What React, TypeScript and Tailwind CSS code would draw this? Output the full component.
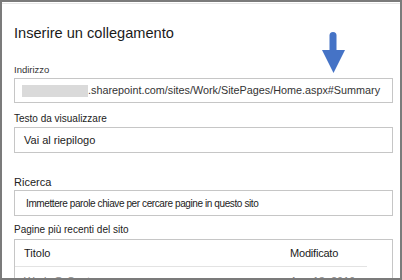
export default function App() {
  return (
    <div className="relative w-[402px] h-[280px] overflow-hidden bg-white border-2 border-[#7b7b7b] text-[#222]" style={{ fontFamily: '"Liberation Sans", Arial, sans-serif' }}>
      <div className="h-px mt-[1px] bg-[#e8e8e8]" />

      {/* freccia blu */}
      <svg className="absolute left-[320px] top-[30px]" width="23" height="42" viewBox="0 0 23 42">
        <rect x="7.5" y="0" width="7" height="22" rx="3.5" fill="#4573c6" />
        <polygon points="0,18 23,18 11.5,41" fill="#4573c6" />
      </svg>

      <div className="pl-[12px] pr-[7px]">
        <h1 className="mt-[19px] text-[14.6px] leading-[20px] font-normal text-[#1a1a1a]">Inserire un collegamento</h1>

        <div className="mt-[21px] text-[9.5px] leading-[12px] text-[#333]">Indirizzo</div>
        <div className="mt-[2px] h-[25px] border border-[#c6c6c6] flex items-center px-[7px] text-[10.8px] text-[#333] whitespace-nowrap">
          <span className="shrink-0 inline-block w-[66px] h-[12px] bg-[#dadada]" />
          <span>.sharepoint.com/sites/Work/SitePages/Home.aspx#Summary</span>
        </div>

        <div className="mt-[9px] text-[10px] leading-[14px]">Testo da visualizzare</div>
        <div className="mt-[1px] h-[26px] border border-[#c6c6c6] flex items-center px-[9px] text-[11px]">Vai al riepilogo</div>

        <div className="mt-[21px] text-[11px] leading-[16px]">Ricerca</div>
        <div className="h-[26px] border border-[#c6c6c6] flex items-center px-[11px] text-[10px] tracking-[-0.4px] whitespace-nowrap">Immettere parole chiave per cercare pagine in questo sito</div>

        <div className="mt-[7px] text-[10px] leading-[14px]">Pagine più recenti del sito</div>
        <div className="mt-[2px] border border-[#c6c6c6] h-[60px]">
          <div className="flex items-center h-[27px] mr-[25px] border-b border-[#e3e3e3] text-[11px] text-[#1a1a1a]">
            <span className="pl-[9px] w-[275px] shrink-0">Titolo</span>
            <span className="tracking-[-0.2px]">Modificato</span>
          </div>
          <div className="flex items-center h-[28px] text-[11px] text-[#888]">
            <span className="pl-[9px] w-[275px] shrink-0">Work @ Contoso</span>
            <span>Aug 13, 2019</span>
          </div>
        </div>
      </div>
    </div>
  );
}
